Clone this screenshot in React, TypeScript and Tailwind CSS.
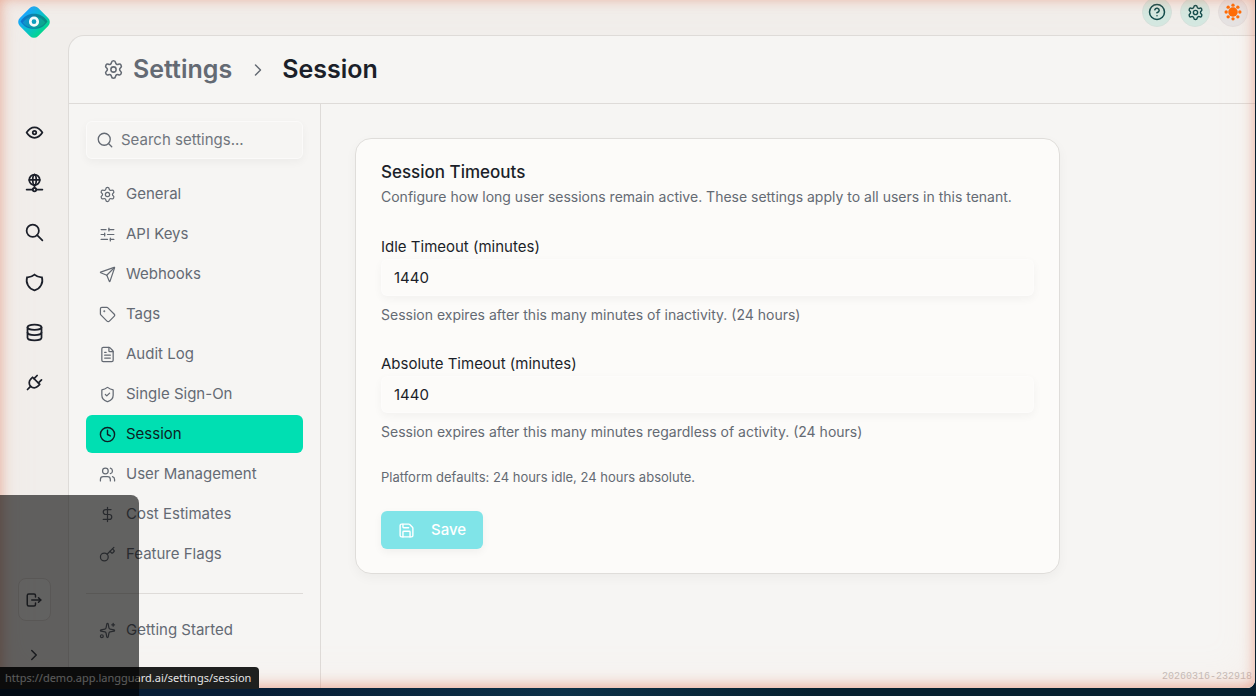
import {
  ChevronRight,
  CircleHelp,
  Clock,
  DollarSign,
  FileText,
  Key,
  Save,
  Search,
  Send,
  Settings,
  ShieldCheck,
  SlidersHorizontal,
  Sparkles,
  Tag,
  Users,
} from "lucide-react";
import {
  TbChevronRight,
  TbDatabase,
  TbEye,
  TbLogout,
  TbNetwork,
  TbPlug,
  TbSearch,
  TbShield,
} from "react-icons/tb";
import clsx from "clsx";

const railItems = [
  { label: "Overview", icon: TbEye },
  { label: "Network", icon: TbNetwork },
  { label: "Search", icon: TbSearch },
  { label: "Policies", icon: TbShield },
  { label: "Data", icon: TbDatabase },
  { label: "Integrations", icon: TbPlug },
];

const navItems = [
  { label: "General", icon: Settings },
  { label: "API Keys", icon: SlidersHorizontal },
  { label: "Webhooks", icon: Send },
  { label: "Tags", icon: Tag },
  { label: "Audit Log", icon: FileText },
  { label: "Single Sign-On", icon: ShieldCheck },
  { label: "Session", icon: Clock, active: true },
  { label: "User Management", icon: Users },
  { label: "Cost Estimates", icon: DollarSign },
  { label: "Feature Flags", icon: Key },
];

function Logo() {
  return (
    <svg viewBox="0 0 32 32" className="size-9" aria-hidden="true">
      <defs>
        <linearGradient id="logo-bg" x1="0" y1="0.5" x2="1" y2="0.5">
          <stop offset="0" stopColor="#14a6ff" />
          <stop offset="0.5" stopColor="#08c0d0" />
          <stop offset="1" stopColor="#03d68f" />
        </linearGradient>
        <linearGradient id="logo-lid" x1="0" y1="0" x2="1" y2="0">
          <stop offset="0" stopColor="#0a74d2" />
          <stop offset="1" stopColor="#07907c" />
        </linearGradient>
        <linearGradient id="logo-eye" x1="0" y1="0" x2="1" y2="0.3">
          <stop offset="0" stopColor="#0c8fe0" />
          <stop offset="1" stopColor="#0aa88e" />
        </linearGradient>
      </defs>
      <rect x="4.6" y="4.6" width="22.8" height="22.8" rx="5" fill="url(#logo-bg)" transform="rotate(45 16 16)" />
      <path d="M4 15.500C7 11 11 8.700 16 8.700s9 2.300 12 6.800c-3 4.700-7 6.500-12 6.500s-9-1.800-12-6.500z" fill="url(#logo-lid)" />
      <path d="M6 16.500c2.500-3.500 5.800-5.200 10-5.200s7.500 1.700 10 5.200c-2.500 3.300-5.800 4.800-10 4.800s-7.500-1.500-10-4.800z" fill="url(#logo-eye)" />
      <circle cx="16" cy="15.700" r="3.300" fill="#0b9fc0" stroke="#f4fbfb" strokeWidth="2.400" />
    </svg>
  );
}

function Sun() {
  return (
    <svg viewBox="0 0 24 24" className="size-5" fill="#ff6a00" aria-hidden="true">
      <circle cx="12" cy="12" r="5.700" />
      <circle cx="12" cy="3.800" r="2" />
      <circle cx="17.800" cy="6.200" r="2" />
      <circle cx="20.200" cy="12" r="2" />
      <circle cx="17.800" cy="17.800" r="2" />
      <circle cx="12" cy="20.200" r="2" />
      <circle cx="6.200" cy="17.800" r="2" />
      <circle cx="3.800" cy="12" r="2" />
      <circle cx="6.200" cy="6.200" r="2" />
    </svg>
  );
}

function Rail() {
  return (
    <aside className="flex w-[68px] shrink-0 flex-col items-center pt-1 text-[#1b1f29]">
      <a href="#home" aria-label="Home">
        <Logo />
      </a>
      <nav className="mt-[72px] flex flex-col gap-[10px]">
        {railItems.map(({ label, icon: Icon }) => (
          <a key={label} href="#" aria-label={label} className="flex size-10 items-center justify-center">
            <Icon size={21} />
          </a>
        ))}
      </nav>
      <div className="mt-auto flex flex-col items-center gap-3 pb-[11px]">
        <button
          aria-label="Sign out"
          className="flex h-[43px] w-[33px] items-center justify-center rounded-lg border border-[#dedad6] bg-[#f6f4f2] text-[#3f444d]"
        >
          <TbLogout size={18} />
        </button>
        <button aria-label="Expand sidebar" className="flex h-11 w-8 items-center justify-center text-[#3f444d]">
          <TbChevronRight size={18} />
        </button>
      </div>
    </aside>
  );
}

function NavLink({ label, icon: Icon, active }: { label: string; icon: typeof Clock; active?: boolean }) {
  return (
    <a
      href="#"
      className={clsx(
        "flex h-[38px] items-center gap-[10px] rounded-md px-[13px] text-[15px]",
        active ? "bg-[#00dfb2] text-[#0c1f24]" : "text-[#646a73]",
      )}
    >
      <Icon size={17} strokeWidth={active ? 2 : 1.75} />
      {label}
    </a>
  );
}

function TimeoutField({ id, label, help }: { id: string; label: string; help: string }) {
  return (
    <div>
      <label htmlFor={id} className="block text-[15px] leading-5 text-[#1b1f29]">
        {label}
      </label>
      <input
        id={id}
        defaultValue="1440"
        className="mt-0.5 h-[37px] w-full rounded-md border border-white/40 bg-[#fcfbf9] px-3 text-[15px] text-[#1b1f29] shadow-[0_3px_8px_rgba(0,0,0,0.045)] outline-none"
      />
      <p className="mt-2 text-[14px] leading-[22px] text-[#646a73]">{help}</p>
    </div>
  );
}

export default function App() {
  return (
    <div className="relative h-screen overflow-hidden bg-linear-to-r from-[#071d35] from-20% via-[#0c3148] via-45% to-[#06202f] to-65% pr-px pb-2 font-['Inter',sans-serif]">
      <div className="relative flex h-full overflow-hidden rounded-br-lg bg-[#f1eeeb]">
        <Rail />

        <div className="flex min-w-0 flex-1 flex-col">
          <header className="flex h-[35px] shrink-0 items-start justify-end gap-2 pr-[7px]">
            <button aria-label="Help" className="-mt-[3px] flex size-[30px] items-center justify-center rounded-full border border-[#d6e1dc] bg-[#d4e8e1] text-[#0f4a4a]">
              <CircleHelp size={18} />
            </button>
            <button aria-label="Settings" className="-mt-[3px] flex size-[30px] items-center justify-center rounded-full border border-[#d6e1dc] bg-[#d4e8e1] text-[#0f4a4a]">
              <Settings size={17} />
            </button>
            <button aria-label="Toggle theme" className="-mt-[3px] flex size-[30px] items-center justify-center rounded-full border border-[#e3dedd] bg-[#e5e3e3]">
              <Sun />
            </button>
          </header>

          <div className="flex min-h-0 flex-1 flex-col overflow-hidden rounded-tl-2xl border-t border-l border-[#dedbd8] bg-[#f6f5f3]">
            <div className="flex h-[68px] shrink-0 items-center border-b border-[#dedbd8] pl-[34px] text-[25px] font-semibold">
              <a href="#settings" className="flex items-center gap-[9px] text-[#646a73]">
                <Settings size={21} strokeWidth={1.75} />
                Settings
              </a>
              <ChevronRight size={20} strokeWidth={1.75} className="mr-3.5 ml-4 text-[#646a73]" />
              <h1 className="text-[#1b1f29]">Session</h1>
            </div>

            <div className="flex min-h-0 flex-1">
              <aside className="w-[252px] shrink-0 overflow-hidden border-r border-[#dedbd8] px-[17px] pt-[17px]">
                <label className="flex h-[38px] items-center gap-[7px] rounded-md border border-white/50 px-[9px] text-[#646a73] shadow-[0_3px_8px_rgba(0,0,0,0.045)]">
                  <Search size={18} strokeWidth={1.75} className="shrink-0" />
                  <input
                    aria-label="Search settings"
                    placeholder="Search settings..."
                    className="w-full min-w-0 bg-transparent text-[15px] outline-none placeholder:text-[#70757d]"
                  />
                </label>
                <nav className="mt-4 flex flex-col gap-0.5">
                  {navItems.map((item) => (
                    <NavLink key={item.label} {...item} />
                  ))}
                  <hr className="mt-[18px] mb-[15px] border-[#dedbd8]" />
                  <NavLink label="Getting Started" icon={Sparkles} />
                </nav>
              </aside>

              <main className="min-w-0 flex-1 p-[34px]">
                <section className="max-w-[705px] rounded-2xl border border-[#dfddda] bg-[#fcfbf9] px-[25px] py-6 shadow-[0_4px_12px_rgba(0,0,0,0.04)]">
                  <h2 className="text-[17px] leading-[18px] font-medium text-[#1b1f29]">Session Timeouts</h2>
                  <p className="mt-1 text-[14px] leading-6 text-[#646a73]">
                    Configure how long user sessions remain active. These settings apply to all users in this tenant.
                  </p>
                  <form className="mt-7">
                    <div className="flex flex-col gap-7">
                      <TimeoutField
                        id="idle-timeout"
                        label="Idle Timeout (minutes)"
                        help="Session expires after this many minutes of inactivity. (24 hours)"
                      />
                      <TimeoutField
                        id="absolute-timeout"
                        label="Absolute Timeout (minutes)"
                        help="Session expires after this many minutes regardless of activity. (24 hours)"
                      />
                    </div>
                    <p className="mt-6 text-[13px] leading-5 text-[#646a73]">
                      Platform defaults: 24 hours idle, 24 hours absolute.
                    </p>
                    <button
                      type="button"
                      className="mt-6 flex h-[38px] items-center gap-4 rounded-md bg-[#80e4e8] px-[17px] text-[15px] font-medium text-white shadow-[0_3px_8px_rgba(0,0,0,0.05)]"
                    >
                      <Save size={17} />
                      Save
                    </button>
                  </form>
                </section>
              </main>
            </div>
          </div>
        </div>

        <span className="absolute right-[3px] bottom-1 font-['Liberation_Mono',monospace] text-[10px] text-[#c4bdba]">
          20260316-232918
        </span>
        {/* warm glow around the window edge */}
        <div className="pointer-events-none absolute inset-0 rounded-br-lg shadow-[inset_0_-2px_14px_rgba(226,120,88,0.58),inset_0_-6px_40px_rgba(250,190,170,0.12)]" />
      </div>

      <div className="absolute bottom-[7px] left-0 rounded-tr-sm bg-[#1f201f] pr-2 pl-[5px] font-['Noto_Sans',sans-serif] text-[11px] leading-[22px] text-[#e4e4e4]">
        https://demo.app.langguard.ai/settings/session
      </div>
      <div className="pointer-events-none absolute bottom-0 left-0 h-[201px] w-[139px] rounded-tr-lg bg-black/60" />
    </div>
  );
}
